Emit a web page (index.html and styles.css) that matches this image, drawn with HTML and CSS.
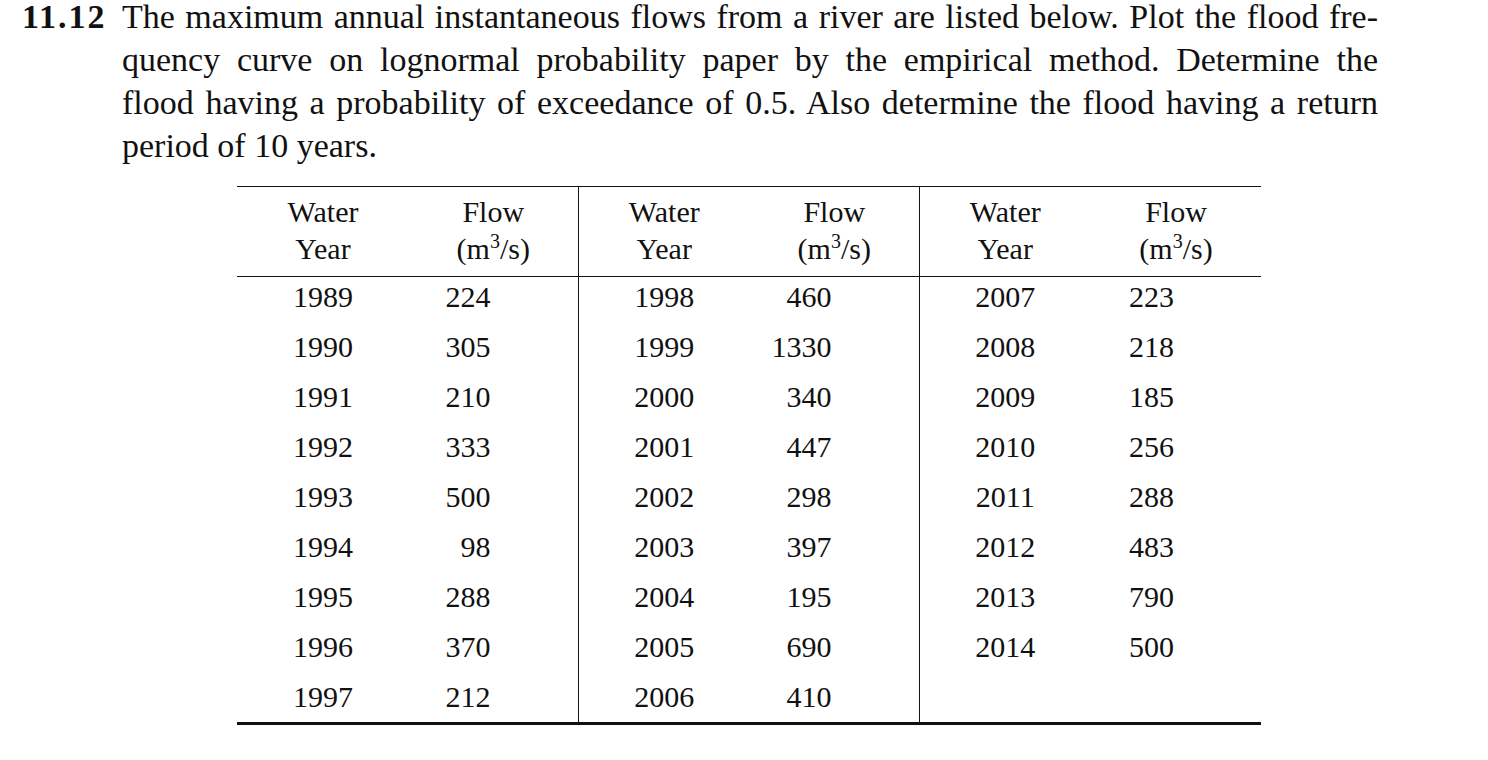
FILE: index.html
```html
<!DOCTYPE html>
<html>
<head>
<meta charset="utf-8">
<link rel="stylesheet" href="styles.css">
</head>
<body>
<div class="problem">
  <div class="num">11.12</div>
  <div class="text">
    <span class="line">The maximum annual instantaneous flows from a river are listed below. Plot the flood fre-</span>
    <span class="line">quency curve on lognormal probability paper by the empirical method. Determine the</span>
    <span class="line">flood having a probability of exceedance of 0.5. Also determine the flood having a return</span>
    <span class="line last">period of 10 years.</span>
  </div>
</div>
<table class="flows">
  <colgroup>
    <col class="ca"><col class="cb"><col class="ca"><col class="cb"><col class="ca"><col class="cb3">
  </colgroup>
  <thead>
    <tr>
      <th>Water<br>Year</th><th class="sep">Flow<br>(m<sup>3</sup>/s)</th>
      <th>Water<br>Year</th><th class="sep">Flow<br>(m<sup>3</sup>/s)</th>
      <th>Water<br>Year</th><th>Flow<br>(m<sup>3</sup>/s)</th>
    </tr>
  </thead>
  <tbody>
    <tr><td>1989</td><td class="q sep">224</td><td>1998</td><td class="q sep">460</td><td>2007</td><td class="q">223</td></tr>
    <tr><td>1990</td><td class="q sep">305</td><td>1999</td><td class="q sep">1330</td><td>2008</td><td class="q">218</td></tr>
    <tr><td>1991</td><td class="q sep">210</td><td>2000</td><td class="q sep">340</td><td>2009</td><td class="q">185</td></tr>
    <tr><td>1992</td><td class="q sep">333</td><td>2001</td><td class="q sep">447</td><td>2010</td><td class="q">256</td></tr>
    <tr><td>1993</td><td class="q sep">500</td><td>2002</td><td class="q sep">298</td><td>2011</td><td class="q">288</td></tr>
    <tr><td>1994</td><td class="q sep">98</td><td>2003</td><td class="q sep">397</td><td>2012</td><td class="q">483</td></tr>
    <tr><td>1995</td><td class="q sep">288</td><td>2004</td><td class="q sep">195</td><td>2013</td><td class="q">790</td></tr>
    <tr><td>1996</td><td class="q sep">370</td><td>2005</td><td class="q sep">690</td><td>2014</td><td class="q">500</td></tr>
    <tr class="final"><td>1997</td><td class="q sep">212</td><td>2006</td><td class="q sep">410</td><td></td><td class="q"></td></tr>
  </tbody>
</table>
</body>
</html>
```

FILE: styles.css
```css
html, body {
  margin: 0;
  padding: 0;
  background: #fff;
}
body {
  font-family: "Liberation Serif", "Times New Roman", serif;
  color: #111;
  width: 1488px;
  height: 760px;
  overflow: hidden;
}
.problem {
  display: flex;
  padding-left: 22px;
  margin-top: -5px;
  font-size: 34px;
  line-height: 43px;
}
.num {
  width: 100px;
  font-weight: bold;
  flex: none;
  letter-spacing: 2px;
}
.text {
  width: 1256px;
  flex: none;
}
.line {
  display: block;
  white-space: nowrap;
  text-align: justify;
  text-align-last: justify;
}
.line.last {
  text-align-last: left;
}
.flows {
  margin-left: 237px;
  margin-top: 19px;
  width: 1024px;
  table-layout: fixed;
  border-collapse: collapse;
  font-size: 30px;
  border-top: 1.5px solid #111;
  border-bottom: 3px solid #111;
}
.ca { width: 172px; }
.cb { width: 169px; }
.cb3 { width: 170px; }
th {
  font-weight: normal;
  text-align: center;
  line-height: 37px;
  padding: 6px 0 9px;
  border-bottom: 1.5px solid #111;
  vertical-align: top;
}
th.sep, td.sep {
  border-right: 1.5px solid #111;
}
sup {
  font-size: 20px;
  line-height: 0;
  vertical-align: 11px;
}
td {
  height: 40px;
  padding: 0 0 10px;
  text-align: center;
  vertical-align: middle;
  line-height: 30px;
}
.final td {
  padding-bottom: 5px;
}
td.q {
  text-align: right;
  padding-right: 87px;
}
```
